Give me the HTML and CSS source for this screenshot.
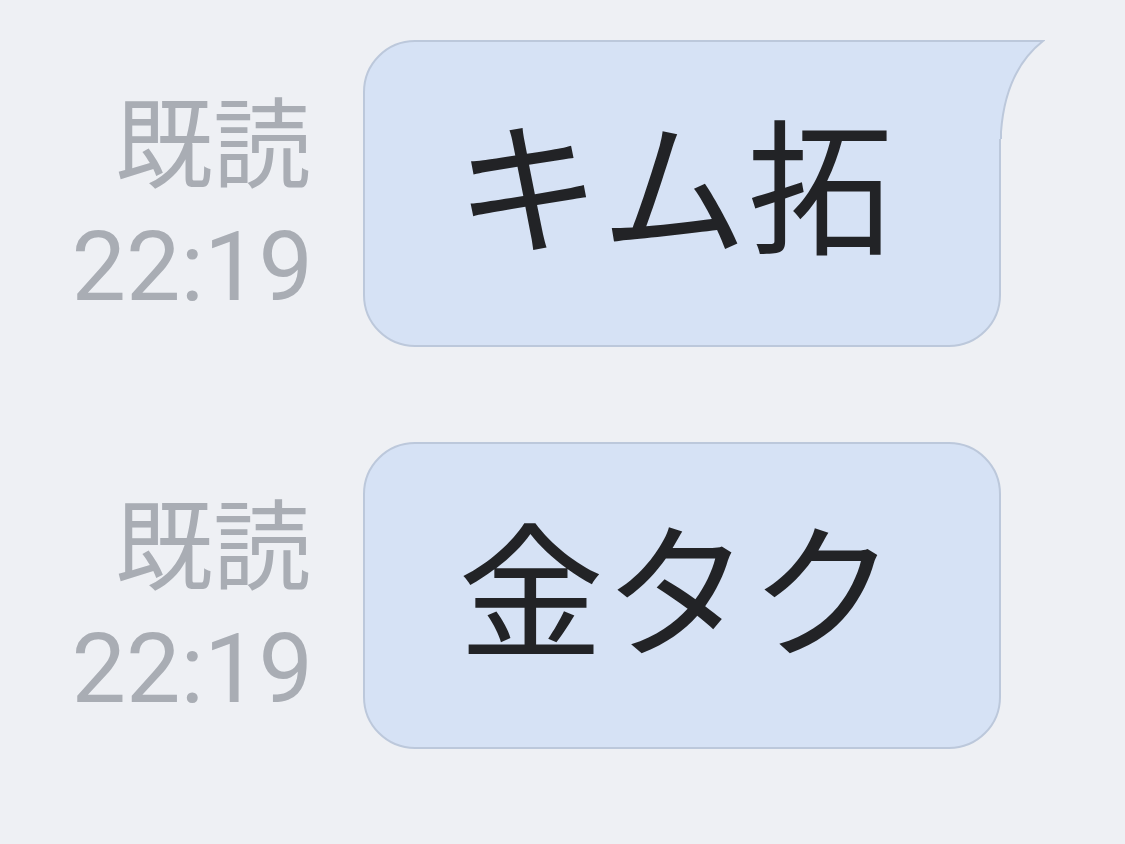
FILE: index.html
```html
<!DOCTYPE html>
<html lang="ja">
<head>
<meta charset="utf-8">
<link rel="stylesheet" href="styles.css">
</head>
<body>
<main class="chat">
  <div class="row">
    <div class="meta"><span class="read">既読</span><span class="time">22:19</span></div>
    <div class="bubble first">
      <span class="msg">キム拓</span>
      <svg class="tail" width="46" height="100" viewBox="0 0 46 100" aria-hidden="true">
        <path d="M0 1 L44 1 C30 12 6 36 2 92 L2 99 L0 99 Z" fill="#d6e2f5"/>
        <path d="M0 1 L44 1 C30 12 6 36 2 92 L2 99" fill="none" stroke="#bcc8db" stroke-width="2"/>
      </svg>
    </div>
  </div>
  <div class="row">
    <div class="meta"><span class="read">既読</span><span class="time">22:19</span></div>
    <div class="bubble">
      <span class="msg">金タク</span>
    </div>
  </div>
</main>
</body>
</html>
```
FILE: styles.css
```css
html, body {
  margin: 0;
  padding: 0;
  background: #eef0f4;
}
body {
  width: 1125px;
  height: 844px;
  overflow: hidden;
  font-family: "Noto Sans CJK JP", "Noto Sans", sans-serif;
}
.chat {
  display: flex;
  flex-direction: column;
  align-items: flex-end;
  gap: 95px;
  padding: 40px 124px 0 0;
}
.row {
  display: flex;
  align-items: flex-end;
  gap: 52px;
}
.meta {
  display: flex;
  flex-direction: column;
  align-items: flex-end;
  color: #a9adb4;
  padding-bottom: 22px;
}
.read {
  font-size: 98px;
  line-height: 120px;
  margin-bottom: 12px;
}
.time {
  font-family: Roboto, "Noto Sans", sans-serif;
  font-size: 97px;
  line-height: 116px;
  margin-right: -2px;
}
.bubble {
  position: relative;
  box-sizing: border-box;
  width: 638px;
  height: 307px;
  display: flex;
  align-items: center;
  justify-content: center;
  background: #d6e2f5;
  border: 2px solid #bcc8db;
  border-radius: 52px;
}
.bubble.first {
  border-top-right-radius: 0;
}
.msg {
  font-size: 146px;
  line-height: 1;
  color: #222326;
  margin-top: -26px;
  margin-left: -10px;
}
.bubble.first .msg {
  margin-top: -28px;
  margin-left: -16px;
}
.tail {
  position: absolute;
  top: -2px;
  right: -46px;
}
```
